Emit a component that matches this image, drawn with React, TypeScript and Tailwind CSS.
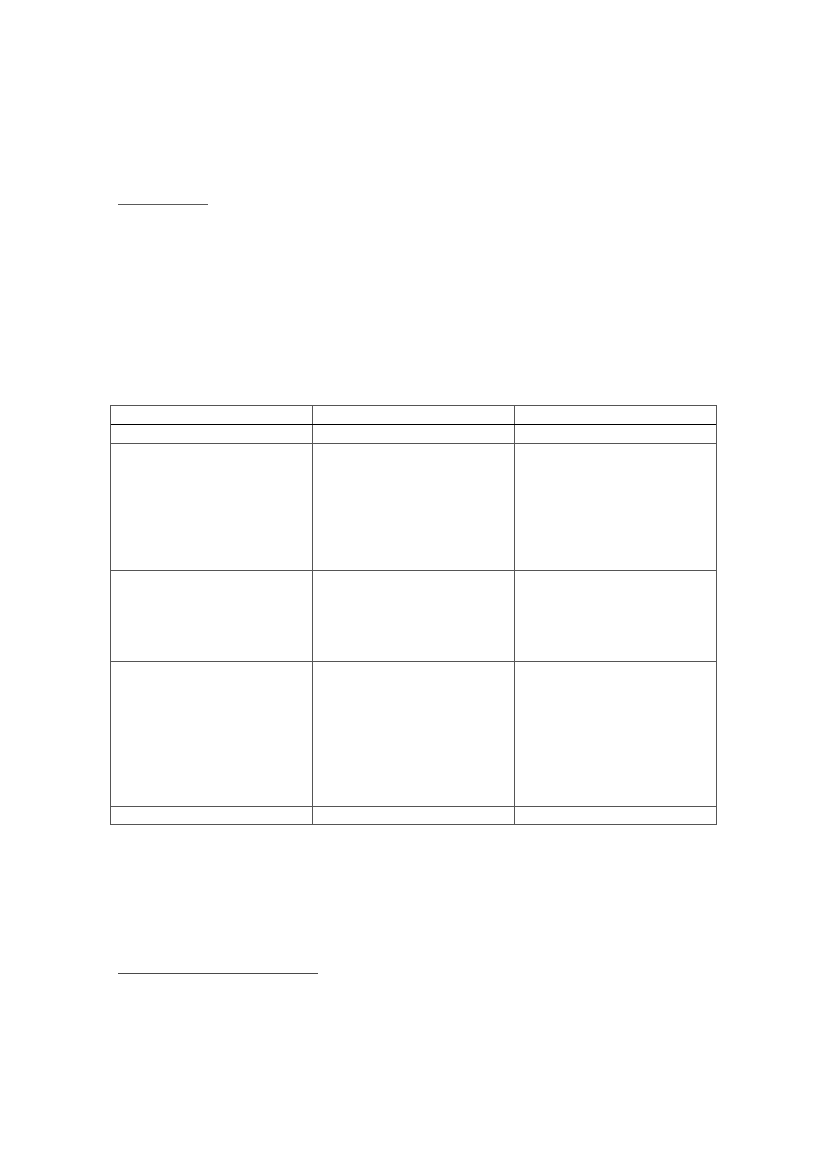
import React from "react";

const rows: { h: string; header?: boolean }[] = [
  { h: "h-[19px]", header: true },
  { h: "h-[19px]" },
  { h: "h-[127px]" },
  { h: "h-[91px]" },
  { h: "h-[145px]" },
  { h: "h-[17px]" },
];

export default function App() {
  return (
    <div className="w-[826px] h-[1169px] bg-white overflow-hidden" style={{ fontFamily: '"Liberation Serif", serif' }}>
      <div className="pt-[204px] pl-[118px]">
        <div className="w-[90px] h-px bg-[#5a5a5a]" />
      </div>
      <div className="mt-[200px] ml-[110px] w-[607px] border border-[#555555]">
        {rows.map((r, i) => (
          <div
            key={i}
            className={`grid grid-cols-[202px_202px_201px] ${r.h} ${
              i === rows.length - 1 ? "" : r.header ? "border-b border-black" : "border-b border-[#555555]"
            }`}
          >
            <div className="border-r border-[#555555]" />
            <div className="border-r border-[#555555]" />
            <div />
          </div>
        ))}
      </div>
      <div className="mt-[148px] pl-[118px]">
        <div className="w-[200px] h-px bg-[#4a4a4a]" />
      </div>
    </div>
  );
}
